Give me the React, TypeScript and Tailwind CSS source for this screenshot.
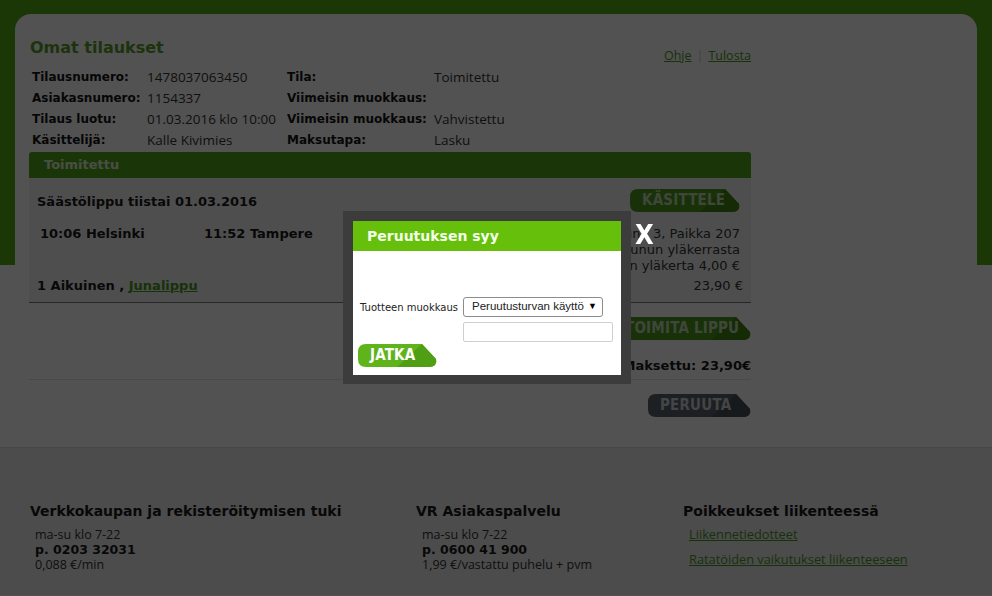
import React from 'react';

function TagButton({
  label,
  width,
  fill,
  shade,
  textClass,
  className,
}: {
  label: string;
  width: number;
  fill: string;
  shade: string;
  textClass: string;
  className: string;
}) {
  const w = width;
  const h = 23;
  const body = `M8 0H${w - 15}L${w - 1} ${h - 8}Q${w} ${h - 5} ${w - 2} ${h - 2}Q${w - 4} ${h} ${w - 8} ${h}H8Q0 ${h} 0 ${h - 8}V8Q0 0 8 0Z`;
  const fold = `M${w - 15} 0L${w - 1} ${h - 8}Q${w} ${h - 5} ${w - 2} ${h - 2}Q${w - 4} ${h} ${w - 8} ${h}H${w - 40}Z`;
  return (
    <div className={`relative h-[23px] ${className}`}>
      <svg className="absolute inset-0" width={w} height={h} viewBox={`0 0 ${w} ${h}`}>
        <path d={body} fill={fill} />
        <path d={fold} fill={shade} />
      </svg>
      <span
        className={`relative flex h-full items-center pl-[12px] font-['Liberation_Sans_Narrow','DejaVu_Sans_Condensed',sans-serif] text-[15px] font-bold tracking-[0.2px] ${textClass}`}
      >
        {label}
      </span>
    </div>
  );
}

const label = "font-bold text-[12px] text-[#151515]";
const value = "font-['Open_Sans',sans-serif] text-[13.5px] text-[#333]";

export default function App() {
  return (
    <div className="relative min-h-[596px] w-full overflow-hidden bg-[linear-gradient(to_bottom,#58aa15_0,#58aa15_265px,#ffffff_265px)] font-['DejaVu_Sans',sans-serif]">
      {/* main card */}
      <div className="px-[15px] pt-[14px]">
        <div className="rounded-t-[16px] bg-white pl-[14px] pt-[24px] pb-[30px]">
          <div className="w-[722px]">
            <div className="flex h-[20px] items-start justify-between">
              <h1 className="pl-[1px] text-[16px] font-bold leading-[20px] text-[#5aa02a]">Omat tilaukset</h1>
              <div className="mt-[10px] flex items-center gap-[5px] font-['Open_Sans',sans-serif] text-[12.5px] leading-[16px] text-[#4a9a1e]">
                <span className="underline">Ohje</span>
                <span className="text-[#ccc]">|</span>
                <span className="underline">Tulosta</span>
              </div>
            </div>

            <div className="mt-[8.5px] grid grid-cols-[115px_140px_147px_1fr] pl-[3px] leading-[21px]">
              <span className={label}>Tilausnumero:</span>
              <span className={value}>1478037063450</span>
              <span className={label}>Tila:</span>
              <span className={value}>Toimitettu</span>
              <span className={label}>Asiakasnumero:</span>
              <span className={value}>1154337</span>
              <span className={label}>Viimeisin muokkaus:</span>
              <span className={value}></span>
              <span className={label}>Tilaus luotu:</span>
              <span className={value}>01.03.2016 klo 10:00</span>
              <span className={label}>Viimeisin muokkaus:</span>
              <span className={value}>Vahvistettu</span>
              <span className={label}>Käsittelijä:</span>
              <span className={value}>Kalle Kivimies</span>
              <span className={label}>Maksutapa:</span>
              <span className={value}>Lasku</span>
            </div>

            <div className="mt-[1.5px] flex h-[26px] items-center rounded-t-[3px] bg-[#52a416] pl-[15px] text-[13px] font-bold text-[#e2f3d4]">
              Toimitettu
            </div>

            <div className="border-b border-[#777] bg-[#f3f3f3] pt-[12px] pb-[8px] pl-[8px] pr-[11px]">
              <div className="flex h-[23px] items-center justify-between">
                <span className="text-[13px] font-bold text-[#1a1a1a]">Säästölippu tiistai 01.03.2016</span>
                <TagButton
                  label="KÄSITTELE"
                  width={110}
                  fill="#4c9a1a"
                  shade="#3f8614"
                  textClass="text-[#c4dcb4]"
                  className="-mt-[2px] w-[110px]"
                />
              </div>
              <div className="mt-[13px] flex justify-between leading-[16px]">
                <div className="flex pl-[3px] text-[13px] font-bold text-[#1a1a1a]">
                  <span className="w-[164px]">10:06 Helsinki</span>
                  <span>11:52 Tampere</span>
                </div>
                <div className="text-right text-[13px] text-[#333]">
                  <div>Vaunu 3, Paikka 207</div>
                  <div>Paikka vaunun yläkerrasta</div>
                  <div>Paikka vaunun yläkerta 4,00 €</div>
                </div>
              </div>
              <div className="mt-[4px] flex justify-between leading-[16px]">
                <span className="text-[13px] font-bold text-[#1a1a1a]">
                  1 Aikuinen , <span className="text-[#4a9a1e] underline">Junalippu</span>
                </span>
                <span className="mr-[-3px] text-[13px] text-[#333]">23,90 €</span>
              </div>
            </div>

            <div className="flex flex-col items-end">
              <TagButton
                label="TOIMITA LIPPU"
                width={138}
                fill="#4c9a1a"
                shade="#3f8614"
                textClass="text-[#c4dcb4]"
                className="mt-[14px] w-[138px]"
              />
              <div className="mt-[18px] text-[13px] font-bold leading-[16px] text-[#1a1a1a]">Maksettu: 23,90€</div>
            </div>
            <div className="mt-[5px] border-b border-[#e4e4e4]"></div>
            <div className="flex justify-end">
              <TagButton
                label="PERUUTA"
                width={103}
                fill="#59636a"
                shade="#4a5358"
                textClass="text-[#cfd6da]"
                className="mt-[14px] w-[103px]"
              />
            </div>
          </div>
        </div>
      </div>

      {/* footer */}
      <footer className="min-h-[148px] border-t border-[#dcdcdc] bg-[#ececec] pt-[54px] pl-[30px]">
        <div className="grid grid-cols-[386px_267px_1fr]">
          <div>
            <h3 className="text-[14px] font-bold leading-[18px] text-[#1a1a1a]">Verkkokaupan ja rekisteröitymisen tuki</h3>
            <div className="mt-[6.5px] pl-[5px] leading-[15px] text-[#333]">
              <div className="font-['Open_Sans',sans-serif] text-[12.5px]">ma-su klo 7-22</div>
              <div className="text-[12.5px] font-bold text-[#1a1a1a]">p. 0203 32031</div>
              <div className="font-['Open_Sans',sans-serif] text-[12.5px]">0,088 €/min</div>
            </div>
          </div>
          <div>
            <h3 className="text-[14px] font-bold leading-[18px] text-[#1a1a1a]">VR Asiakaspalvelu</h3>
            <div className="mt-[6.5px] pl-[6px] leading-[15px] text-[#333]">
              <div className="font-['Open_Sans',sans-serif] text-[12.5px]">ma-su klo 7-22</div>
              <div className="text-[12.5px] font-bold text-[#1a1a1a]">p. 0600 41 900</div>
              <div className="font-['Open_Sans',sans-serif] text-[12.5px]">1,99 €/vastattu puhelu + pvm</div>
            </div>
          </div>
          <div>
            <h3 className="text-[14px] font-bold leading-[18px] text-[#1a1a1a]">Poikkeukset liikenteessä</h3>
            <div className="mt-[6.5px] flex flex-col gap-[10px] pl-[6px] font-['Open_Sans',sans-serif] text-[12.8px] leading-[15px] text-[#4a9a1e]">
              <span className="underline">Liikennetiedotteet</span>
              <span className="underline">Ratatöiden vaikutukset liikenteeseen</span>
            </div>
          </div>
        </div>
      </footer>

      {/* modal overlay */}
      <div className="fixed inset-0 bg-black/[0.68]"></div>

      <div className="absolute left-[343px] top-[211px] w-[288px] bg-[#3c3c3c] p-[10px] pb-[9px]">
        <div className="bg-white">
          <div className="flex h-[30px] items-center bg-[#66bf0a] pl-[14px] text-[14px] font-bold text-[#f4ffea]">
            Peruutuksen syy
          </div>
          <div className="pt-[46px] pl-[7px]">
            <div className="flex items-center">
              <span className="w-[103px] whitespace-nowrap text-[10px] text-[#222]">Tuotteen muokkaus</span>
              <div className="flex h-[20px] w-[140px] items-center justify-between whitespace-nowrap rounded-[3px] border border-[#8c8c8c] pr-[5px] pl-[8px] font-['Liberation_Sans',sans-serif] text-[11.5px] text-[#222]">
                <span>Peruutusturvan käyttö</span>
                <span className="text-[9px] text-black">▼</span>
              </div>
            </div>
            <div className="mt-[5px] ml-[103px] h-[20px] w-[150px] rounded-[2px] border border-[#cfcfcf]"></div>
          </div>
          <div className="mt-[2px] pb-[8px] pl-[5px]">
            <TagButton
              label="JATKA"
              width={79}
              fill="#5fb41c"
              shade="#4f9e14"
              textClass="text-white"
              className="w-[79px]"
            />
          </div>
        </div>
        <span className="absolute left-[292px] top-[9px] font-['DejaVu_Sans_Condensed','Liberation_Sans_Narrow',sans-serif] text-[27px] leading-[30px] font-bold text-white">
          X
        </span>
      </div>
    </div>
  );
}
